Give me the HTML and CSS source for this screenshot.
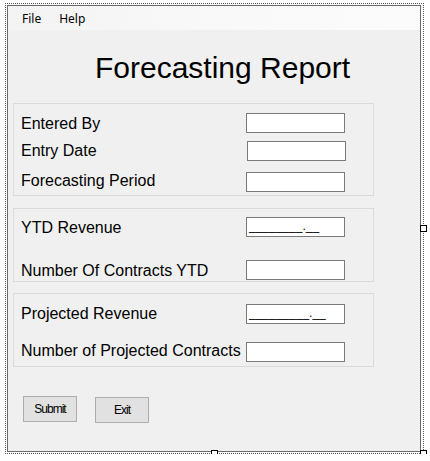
FILE: index.html
```html
<!DOCTYPE html>
<html>
<head>
<meta charset="utf-8">
<title>Forecasting Report</title>
<link rel="stylesheet" href="styles.css">
</head>
<body>
<div class="frame">
  <div class="form">
    <div class="menu">
      <span class="menu-item">File</span>
      <span class="menu-item menu-help">Help</span>
    </div>
    <div class="title">Forecasting Report</div>

    <div class="panel p1">
      <div class="row r1"><span class="label">Entered By</span><span class="box"></span></div>
      <div class="row r2"><span class="label">Entry Date</span><span class="box shift"></span></div>
      <div class="row r3"><span class="label">Forecasting Period</span><span class="box"></span></div>
    </div>

    <div class="panel p2">
      <div class="row r4"><span class="label">YTD Revenue</span><span class="box mask">________.__</span></div>
      <div class="row r5"><span class="label">Number Of Contracts YTD</span><span class="box"></span></div>
    </div>

    <div class="panel p3">
      <div class="row r6"><span class="label">Projected Revenue</span><span class="box mask">_________.__</span></div>
      <div class="row r7"><span class="label">Number of Projected Contracts</span><span class="box"></span></div>
    </div>

    <div class="buttons">
      <span class="btn">Submit</span>
      <span class="btn btn-exit">Exit</span>
    </div>
  </div>
  <span class="handle h-right"></span>
  <span class="handle h-bottom"></span>
  <span class="handle h-corner"></span>
</div>
</body>
</html>
```

FILE: styles.css
```css
html, body {
  margin: 0;
  padding: 0;
  background: #ffffff;
}
body {
  padding: 3px 0 0 5px;
  font-family: "Liberation Sans", Arial, sans-serif;
}
.frame {
  position: relative;
  box-sizing: border-box;
  width: 419px;
  height: 451px;
  border: 1px dotted #555555;
  padding: 1px 0 0 1px;
}
.form {
  box-sizing: border-box;
  width: 414px;
  height: 447px;
  border: 1px solid #6a6a6a;
  background: #f0f0f0;
}
.menu {
  height: 24px;
  display: flex;
  align-items: flex-start;
  background: linear-gradient(to right, #f3f3f3 0%, #f8f8f8 40%, #fbfbfb 100%);
  font-family: "Noto Sans", "Open Sans", sans-serif;
  font-size: 12px;
  color: #000;
}
.menu-item {
  line-height: 16px;
  margin-top: 5px;
  margin-left: 14px;
}
.menu-help {
  margin-left: 18px;
}
.title {
  margin: 21px 0 0 87px;
  font-size: 30px;
  line-height: 34px;
  height: 34px;
  color: #000;
}
.panel {
  box-sizing: border-box;
  width: 361px;
  margin-left: 5px;
  border: 1px solid #dadada;
}
.p1 {
  margin-top: 18px;
  padding: 9px 0 3px 7px;
}
.p2 {
  margin-top: 12px;
  padding: 8px 0 1px 7px;
}
.p3 {
  margin-top: 11px;
  padding: 9px 0 4px 7px;
}
.row {
  display: flex;
  align-items: flex-start;
}
.label {
  width: 225px;
  margin-top: 2px;
  font-size: 16px;
  line-height: 18px;
  color: #000;
  white-space: nowrap;
}
.box {
  box-sizing: border-box;
  width: 99px;
  height: 20px;
  border: 1px solid #7a7a7a;
  background: #ffffff;
}
.shift {
  margin-left: 1px;
}
.r2 { margin-top: 7px; }
.r2 .box { margin-top: 1px; }
.r3 { margin-top: 9px; }
.r3 .box { margin-top: 2px; }
.r5 { margin-top: 23px; }
.r6 .box { margin-top: 1px; }
.r7 { margin-top: 16px; }
.r7 .box { margin-top: 2px; }
.mask {
  font-family: "Liberation Sans", Arial, sans-serif;
  font-size: 12px;
  line-height: 14px;
  padding: 1px 0 0 2px;
  color: #000;
  overflow: hidden;
  white-space: nowrap;
}
.buttons {
  display: flex;
  align-items: flex-start;
  margin: 29px 0 0 15px;
}
.btn {
  box-sizing: border-box;
  width: 54px;
  height: 26px;
  border: 1px solid #adadad;
  background: #e1e1e1;
  font-size: 12px;
  letter-spacing: -1px;
  line-height: 24px;
  text-align: center;
  color: #000;
}
.btn-exit {
  margin: 1px 0 0 18px;
}
.handle {
  position: absolute;
  box-sizing: border-box;
  width: 7px;
  height: 7px;
  border: 1px solid #000;
  background: #fff;
}
.h-right { left: 414px; top: 221px; }
.h-bottom { left: 205px; top: 446px; }
.h-corner { left: 414px; top: 446px; }
```
